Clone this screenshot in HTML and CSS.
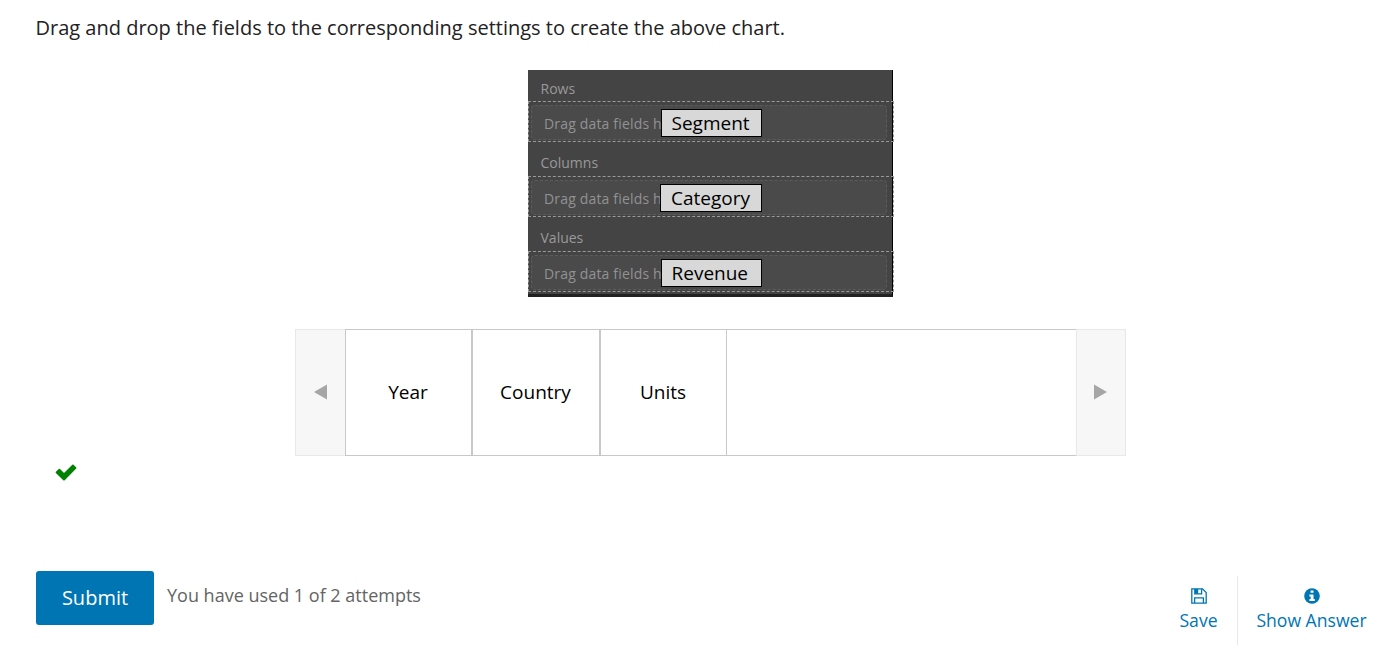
FILE: index.html
```html
<!DOCTYPE html>
<html lang="en">
<head>
<meta charset="utf-8">
<title>Drag and drop</title>
<link rel="stylesheet" href="styles.css">
</head>
<body>
<main class="problem">
  <p class="prompt"><span>Drag and drop the fields to the corresponding settings to create the above chart.</span></p>

  <section class="board">
    <h2 class="label">Rows</h2>
    <div class="zone"><div class="slot"><span class="hint">Drag data fields h</span><span class="chip"><span>Segment</span></span></div></div>
    <h2 class="label">Columns</h2>
    <div class="zone"><div class="slot"><span class="hint">Drag data fields h</span><span class="chip wide"><span>Category</span></span></div></div>
    <h2 class="label">Values</h2>
    <div class="zone"><div class="slot"><span class="hint">Drag data fields h</span><span class="chip"><span>Revenue</span></span></div></div>
  </section>

  <section class="slider">
    <div class="arrow prev"><svg width="14" height="16" viewBox="0 0 14 16"><path d="M0 8 13 0.5V15.5Z"/></svg></div>
    <div class="track">
      <div class="item"><span>Year</span></div>
      <div class="item"><span>Country</span></div>
      <div class="item"><span>Units</span></div>
    </div>
    <div class="arrow next"><svg width="14" height="16" viewBox="0 0 14 16"><path d="M1 0.5 14 8 1 15.5Z"/></svg></div>
  </section>

  <div class="status">
    <svg width="22" height="18" viewBox="0 0 22 18"><path d="M3.8 4.9Q4.4 4.4 5 4.9L9 9 17.3.8Q18 .2 18.6.8L21.2 3.4Q21.8 4 21.2 4.6L9.7 16.2Q9 16.8 8.3 16.2L.9 9Q.3 8.3.9 7.7Z" fill="#008100"/></svg>
  </div>

  <footer class="actions">
    <button class="submit"><span>Submit</span></button>
    <p class="attempts"><span>You have used 1 of 2 attempts</span></p>
    <button class="link save">
      <svg width="16" height="16" viewBox="0 0 16 16" fill="none" stroke="#0075b4" stroke-width="1.3"><path d="M.8 .8H11.5L15.2 4.5V15.2H.8ZM3.6 15V9.8H12.4V15"/><path d="M3.8 1V5.8H10.6V1"/><path d="M3.8 1H7.2V5.8H3.8Z" fill="#0075b4" stroke="none"/></svg>
      <span>Save</span>
    </button>
    <button class="link answer">
      <svg width="16" height="16" viewBox="0 0 16 16"><circle cx="8" cy="8" r="7.8" fill="#0075b4"/><path d="M6.6 2.5H9.5V4.8H6.6ZM5.4 6.4H9.5V11H10.8V13H5.4V11H6.7V8.4H5.4Z" fill="#fff"/></svg>
      <span>Show Answer</span>
    </button>
  </footer>
</main>
</body>
</html>
```
FILE: styles.css
```css
* { box-sizing: border-box; }
body {
  margin: 0;
  background: #fff;
  color: #000;
  font-family: "Open Sans", sans-serif;
  overflow: hidden;
}
p, h2 { margin: 0; }
button { font-family: inherit; border: 0; padding: 0; background: none; }
.problem { display: flex; flex-direction: column; width: 1385px; height: 655px; }
.prompt {
  height: 70px;
  padding: 13px 0 0 35.5px;
  color: #222;
  font-size: 20px;
  line-height: 30px;
  white-space: nowrap;
}
.board {
  width: 365px;
  height: 227px;
  margin-left: 528px;
  background: #444;
  border-right: 1px solid #000;
  border-bottom: 3px solid #222;
}
.label {
  height: 34px;
  padding: 4px 0 0 12.5px;
  color: #999;
  font-size: 14px;
  font-weight: 400;
  line-height: 34px;
}
.label:first-child { height: 31px; padding-top: 1px; line-height: 35px; }
.zone {
  width: 366px;
  height: 41px;
  padding: 3px 6px 1px 2px;
  border: 1px dashed #999;
}
.slot {
  display: flex;
  height: 35px;
  padding: 3px 0 0 12px;
  background: #4a4a4a;
  border: 1px dashed #5b5b5b;
  border-radius: 4px;
}
.hint {
  width: 117px;
  color: #929292;
  font-size: 14px;
  letter-spacing: 0.17px;
  line-height: 29px;
  white-space: nowrap;
  overflow: hidden;
}
.chip {
  width: 101px;
  height: 28px;
  padding-left: 9.5px;
  background: #d8d8d8;
  border: 1px solid #000;
  font-size: 19px;
  line-height: 27px;
}
.chip.wide { width: 102px; margin-left: -1px; padding-left: 10px; }
.slider { display: flex; width: 831px; height: 127px; margin: 32px 0 0 295px; }
.arrow {
  display: flex;
  align-items: center;
  width: 50px;
  padding-bottom: 2px;
  background: #f7f7f7;
  border: 1px solid #e8e8e8;
  fill: #a6a6a6;
}
.prev { padding-left: 18px; border-right: 0; }
.next { padding-left: 16px; }
.track { display: flex; width: 731px; border: solid #c8c8c8; border-width: 1px 0 1px 1px; }
.item {
  width: 127px;
  padding: 47px 1px 0 0;
  border-right: 2px solid #c8c8c8;
  font-size: 19px;
  line-height: 30px;
  text-align: center;
}
.item:nth-child(2) { width: 128px; }
.item:last-child { width: 126px; border-right-width: 1px; }
.status { height: 115px; padding: 8px 0 0 55px; }
.actions { display: flex; }
.submit {
  flex-shrink: 0;
  width: 118px;
  height: 54px;
  padding-bottom: 2px;
  background: #0075b4;
  border-radius: 3px;
  color: #fff;
  font-size: 20px;
  font-weight: 400;
  margin-left: 36px;
}
.attempts { width: 993px; margin-left: 13px; color: #646464; font-size: 18px; line-height: 49px; }
.link {
  display: flex;
  flex-direction: column;
  align-items: center;
  height: 69px;
  margin-top: 5px;
  padding-top: 12px;
  color: #0075b4;
  font-size: 17.6px;
  line-height: 32px;
  white-space: nowrap;
}
.save { width: 78px; border-right: 1px solid #e8e8e8; }
.answer { width: 147px; }
.attempts, .save, .answer { flex-shrink: 0; }
```
